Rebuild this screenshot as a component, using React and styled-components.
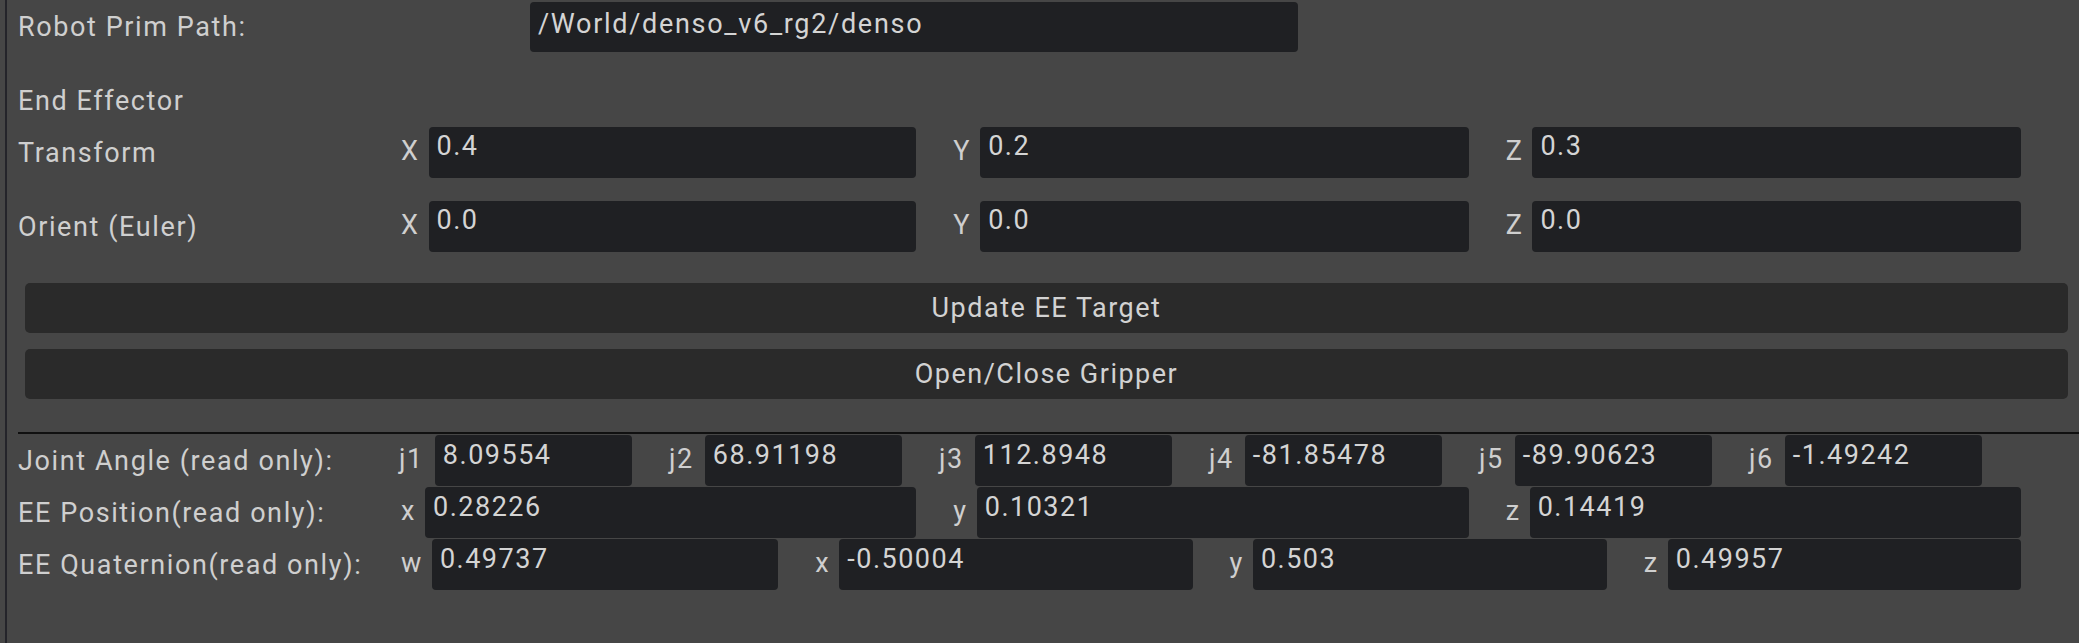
import React from "react";
import styled, { createGlobalStyle } from "styled-components";

const GlobalStyle = createGlobalStyle`
  html, body {
    margin: 0;
    padding: 0;
    background: #464646;
  }
  body {
    font-family: Roboto, "Liberation Sans", sans-serif;
    color: #cfcfcf;
  }
`;

const Page = styled.div`
  width: 2079px;
  height: 643px;
  box-sizing: border-box;
  padding-left: 5px;
  background: #464646;
  display: flex;
  overflow: hidden;
`;

const Panel = styled.div`
  flex: 1;
  border-left: 2px solid #24242a;
  padding-top: 2px;
  display: flex;
  flex-direction: column;
`;

const Content = styled.div`
  padding-left: 11px;
  padding-right: 58px;
  display: flex;
  flex-direction: column;
`;

const Text = styled.span`
  font-size: 27px;
  line-height: 30px;
  letter-spacing: 1.6px;
  white-space: nowrap;
`;

const Row = styled.div`
  display: flex;
  align-items: center;
  height: ${(p) => p.$h || 51}px;
  margin-top: ${(p) => p.$mt || 0}px;
`;

const RowLabel = styled(Text)`
  width: ${(p) => p.$w || 346}px;
  flex: none;
`;

const Header = styled(Text)`
  display: block;
  margin-top: 34px;
  margin-bottom: 11px;
`;

const Field = styled.div`
  box-sizing: border-box;
  height: ${(p) => p.$h || 51}px;
  background: #1f2023;
  border-radius: 4px;
  padding: ${(p) => p.$pt ?? 5}px 8px 0;
  color: #d4d4d4;
  font-size: 27px;
  line-height: 30px;
  letter-spacing: ${(p) => p.$ls ?? 1.5}px;
  white-space: nowrap;
  overflow: hidden;
  ${(p) => (p.$w ? `width: ${p.$w}px; flex: none;` : "flex: 1; min-width: 0;")}
`;

const Group = styled.div`
  display: flex;
  align-items: center;
  box-sizing: border-box;
  padding-left: 37px;
  ${(p) => (p.$w ? `width: ${p.$w}px; flex: none;` : "flex: 1; min-width: 0;")}
`;

const AxisLabel = styled(Text)`
  margin-right: ${(p) => p.$gap || 9}px;
  padding-bottom: 3px;
`;

const Buttons = styled.div`
  display: flex;
  flex-direction: column;
  gap: 16px;
  margin: 31px 11px 0 18px;
`;

const Button = styled.div`
  height: 50px;
  border-radius: 5px;
  background: #2a2a2a;
  display: flex;
  align-items: center;
  justify-content: center;
  font-size: 27px;
  letter-spacing: 1.5px;
  color: #d2d2d2;
`;

const Separator = styled.div`
  height: 2px;
  background: #101010;
  margin: 33px 0 1px 11px;
`;

const ReadRows = styled.div`
  display: flex;
  flex-direction: column;
  gap: 1px;
`;

const AxisGroup = ({ label, value, w, gap, pt }) => (
  <Group $w={w}>
    <AxisLabel $gap={gap}>{label}</AxisLabel>
    <Field $pt={pt}>{value}</Field>
  </Group>
);

const joints = [
  ["j1", "8.09554"],
  ["j2", "68.91198"],
  ["j3", "112.8948"],
  ["j4", "-81.85478"],
  ["j5", "-89.90623"],
  ["j6", "-1.49242"],
];

export default function App() {
  return (
    <>
      <GlobalStyle />
      <Page>
        <Panel>
          <Content>
            <Row $h={50}>
              <RowLabel $w={512}>Robot Prim Path:</RowLabel>
              <Field $w={768} $h={50} $pt={7} $ls={1.7}>/World/denso_v6_rg2/denso</Field>
            </Row>
            <Header>End Effector</Header>
            <Row>
              <RowLabel>Transform</RowLabel>
              <AxisGroup label="X" value="0.4" pt={4} />
              <AxisGroup label="Y" value="0.2" pt={4} />
              <AxisGroup label="Z" value="0.3" pt={4} />
            </Row>
            <Row $mt={23}>
              <RowLabel>Orient (Euler)</RowLabel>
              <AxisGroup label="X" value="0.0" pt={4} />
              <AxisGroup label="Y" value="0.0" pt={4} />
              <AxisGroup label="Z" value="0.0" pt={4} />
            </Row>
          </Content>
          <Buttons>
            <Button>Update EE Target</Button>
            <Button>Open/Close Gripper</Button>
          </Buttons>
          <Separator />
          <Content>
            <ReadRows>
              <Row>
                <RowLabel $w={344}>Joint Angle (read only):</RowLabel>
                {joints.map(([l, v]) => (
                  <AxisGroup key={l} label={l} value={v} w={270} gap={11} />
                ))}
              </Row>
              <Row>
                <RowLabel>EE Position(read only):</RowLabel>
                <AxisGroup label="x" value="0.28226" />
                <AxisGroup label="y" value="0.10321" />
                <AxisGroup label="z" value="0.14419" />
              </Row>
              <Row>
                <RowLabel>EE Quaternion(read only):</RowLabel>
                <AxisGroup label="w" value="0.49737" />
                <AxisGroup label="x" value="-0.50004" />
                <AxisGroup label="y" value="0.503" />
                <AxisGroup label="z" value="0.49957" />
              </Row>
            </ReadRows>
          </Content>
        </Panel>
      </Page>
    </>
  );
}
